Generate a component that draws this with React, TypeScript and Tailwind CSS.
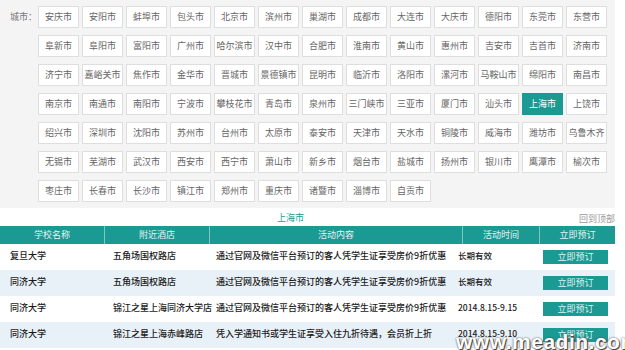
const cities = [
    "安庆市", "安阳市", "蚌埠市", "包头市", "北京市", "滨州市", "巢湖市", "成都市", "大连市", "大庆市", "德阳市", "东莞市", "东营市",
    "阜新市", "阜阳市", "富阳市", "广州市", "哈尔滨市", "汉中市", "合肥市", "淮南市", "黄山市", "惠州市", "吉安市", "吉首市", "济南市",
    "济宁市", "嘉峪关市", "焦作市", "金华市", "晋城市", "景德镇市", "昆明市", "临沂市", "洛阳市", "漯河市", "马鞍山市", "绵阳市", "南昌市",
    "南京市", "南通市", "南阳市", "宁波市", "攀枝花市", "青岛市", "泉州市", "三门峡市", "三亚市", "厦门市", "汕头市", "上海市", "上饶市",
    "绍兴市", "深圳市", "沈阳市", "苏州市", "台州市", "太原市", "泰安市", "天津市", "天水市", "铜陵市", "威海市", "潍坊市", "乌鲁木齐",
    "无锡市", "芜湖市", "武汉市", "西安市", "西宁市", "萧山市", "新乡市", "烟台市", "盐城市", "扬州市", "银川市", "鹰潭市", "榆次市",
    "枣庄市", "长春市", "长沙市", "镇江市", "郑州市", "重庆市", "诸暨市", "淄博市", "自贡市",
]

const deals = [
    { school: "复旦大学", hotel: "五角场国权路店", content: "通过官网及微信平台预订的客人凭学生证享受房价9折优惠", time: "长期有效" },
    { school: "同济大学", hotel: "五角场国权路店", content: "通过官网及微信平台预订的客人凭学生证享受房价9折优惠", time: "长期有效" },
    { school: "同济大学", hotel: "锦江之星上海同济大学店", content: "通过官网及微信平台预订的客人凭学生证享受房价9折优惠", time: "2014.8.15-9.15" },
    { school: "同济大学", hotel: "锦江之星上海赤峰路店", content: "凭入学通知书或学生证享受入住九折待遇，会员折上折", time: "2014.8.15-9.10" },
]

const headers = ["学校名称", "附近酒店", "活动内容", "活动时间", "立即预订"]

export default function App() {
    return (
        <div className="relative w-[625px] h-[350px] overflow-hidden bg-white font-['Noto_Sans_CJK_SC','Liberation_Sans',sans-serif]">
            <div className="w-[615px]">
                {/* city picker */}
                <div className="flex bg-[#f4f4f4] pt-[6px] pb-[6px]">
                    <div className="w-[38px] pl-[10px] h-[22px] flex items-center text-[9px] text-[#777]">城市：</div>
                    <div className="grid grid-cols-[repeat(13,41px)] gap-x-[3px] gap-y-[7px]">
                        {cities.map((city) => (
                            <div
                                key={city}
                                className={
                                    city === "上海市"
                                        ? "h-[22px] flex items-center justify-center text-[9px] border border-[#1a9a92] bg-[#1a9a92] text-white"
                                        : "h-[22px] flex items-center justify-center text-[9px] border border-[#dedede] bg-white text-[#666] whitespace-nowrap"
                                }
                            >
                                {city}
                            </div>
                        ))}
                    </div>
                </div>

                <div className="relative h-[18px] text-[9px]">
                    <span className="absolute left-[277px] top-[3px] text-[#1a9a92]">上海市</span>
                    <span className="absolute right-0 top-[4px] text-[#999]">回到顶部</span>
                </div>

                {/* deals table */}
                <div className="grid grid-cols-[104px_105px_253px_77px_76px] h-[18px] bg-[#1a9a92] text-[9px] text-[#e3f4f2]">
                    {headers.map((h, i) => (
                        <div
                            key={h}
                            className={i === 0 ? "flex items-center justify-center" : "flex items-center justify-center border-l border-[#7cc8c2]"}
                        >
                            {h}
                        </div>
                    ))}
                </div>
                {deals.map((d, i) => (
                    <div
                        key={d.hotel + d.time}
                        className={
                            i % 2 === 0
                                ? "grid grid-cols-[103px_103px_242px_85px_82px] h-[26px] bg-white text-[9px] font-medium text-[#1a1a1a]"
                                : "grid grid-cols-[103px_103px_242px_85px_82px] h-[26px] bg-[#e9f1f8] text-[9px] font-medium text-[#1a1a1a]"
                        }
                    >
                        <div className="pl-[10px] pt-[5px]">{d.school}</div>
                        <div className="pl-[10px] pt-[5px] whitespace-nowrap">{d.hotel}</div>
                        <div className="pl-[10px] pt-[5px] whitespace-nowrap">{d.content}</div>
                        <div className="pl-[10px] pt-[5px] whitespace-nowrap text-[8.5px]">{d.time}</div>
                        <div className="pl-[10px] pt-[6px]">
                            <div className="w-[65px] h-[14px] bg-[#1a9a92] text-[#dff2f0] font-normal flex items-center justify-center text-[9px]">立即预订</div>
                        </div>
                    </div>
                ))}
            </div>

            <div className="absolute left-[456px] top-[326px] text-[21px] font-bold text-white font-['Liberation_Sans',sans-serif] tracking-[0.5px] [text-shadow:0_0_2px_#444,1px_1px_1px_#333] whitespace-nowrap">
                www.meadin.com
            </div>
        </div>
    )
}
